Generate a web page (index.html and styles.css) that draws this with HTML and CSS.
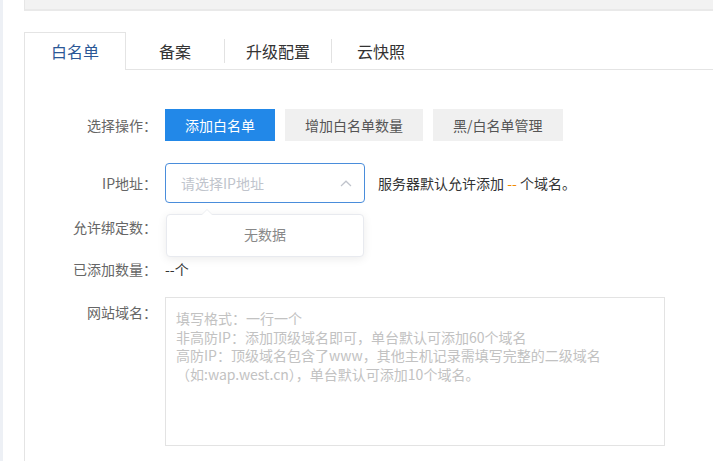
FILE: index.html
```html
<!DOCTYPE html>
<html lang="zh-CN">
<head>
<meta charset="utf-8">
<title>白名单</title>
<link rel="stylesheet" href="styles.css">
</head>
<body>
<div class="page">
  <div class="edge"></div>
  <div class="main">
    <div class="topbar"></div>
    <div class="tabs">
      <div class="tab active">白名单</div>
      <div class="tab">备案</div>
      <span class="tab-sep"></span>
      <div class="tab">升级配置</div>
      <span class="tab-sep"></span>
      <div class="tab">云快照</div>
    </div>
    <div class="panel">
      <div class="row row-ops">
        <div class="label">选择操作：</div>
        <div class="btns">
          <button class="btn btn-primary">添加白名单</button>
          <button class="btn">增加白名单数量</button>
          <button class="btn">黑/白名单管理</button>
        </div>
      </div>
      <div class="row row-ip">
        <div class="label">IP地址：</div>
        <div class="select-wrap">
          <div class="select">
            <span class="placeholder">请选择IP地址</span>
            <svg class="caret" width="12" height="7" viewBox="0 0 12 7"><path d="M1 6 L6 1.2 L11 6" fill="none" stroke="#c0c4cc" stroke-width="1.2"/></svg>
          </div>
          <div class="dropdown">
            <span class="arrow"></span>
            <span class="empty">无数据</span>
          </div>
        </div>
        <div class="hint">服务器默认允许添加 <span class="orange">--</span> 个域名。</div>
      </div>
      <div class="row row-text row-first">
        <div class="label">允许绑定数：</div>
      </div>
      <div class="row row-text">
        <div class="label">已添加数量：</div>
        <div class="value">--个</div>
      </div>
      <div class="row row-domain">
        <div class="label label-top">网站域名：</div>
        <div class="textarea">
          <div>填写格式：一行一个</div>
          <div>非高防IP：添加顶级域名即可，单台默认可添加60个域名</div>
          <div>高防IP：顶级域名包含了www，其他主机记录需填写完整的二级域名</div>
          <div>（如:wap.west.cn），单台默认可添加10个域名。</div>
        </div>
      </div>
    </div>
  </div>
</div>
</body>
</html>
```
FILE: styles.css
```css
html, body {
  margin: 0;
  padding: 0;
  background: #fff;
  font-family: "Noto Sans CJK SC", "Microsoft YaHei", "Liberation Sans", sans-serif;
  font-size: 14px;
  color: #333;
  overflow: hidden;
}
.page {
  display: flex;
  height: 461px;
}
.edge {
  width: 3px;
  background: #edf0f5;
  flex: none;
  margin-right: 21px;
}
.main {
  flex: 1;
  display: flex;
  flex-direction: column;
}
.topbar {
  height: 9px;
  background: #f2f2f2;
  border-left: 1px solid #e6e6e6;
  border-bottom: 2px solid #e9e9e9;
  margin-bottom: 21px;
}
.tabs {
  display: flex;
  align-items: stretch;
  height: 37px;
  border-bottom: 1px solid #e4e4e4;
}
.tab {
  box-sizing: border-box;
  height: 38px;
  min-width: 98px;
  padding: 0 20px 2px;
  display: flex;
  align-items: center;
  justify-content: center;
  font-size: 16px;
  color: #333;
  border: 1px solid transparent;
  border-bottom: none;
}
.tab.active {
  min-width: 102px;
  color: #2b5796;
  background: #fff;
  border-color: #e4e4e4;
  margin-bottom: -1px;
  position: relative;
  z-index: 1;
}
.tab-sep {
  width: 1px;
  height: 24px;
  background: #e2e2e2;
  align-self: center;
  flex: none;
}
.panel {
  flex: 1;
  border-left: 1px solid #e4e4e4;
  padding-top: 39px;
}
.row {
  display: flex;
  align-items: center;
}
.label {
  width: 132px;
  flex: none;
  text-align: right;
  color: #666;
  margin-right: 8px;
  line-height: 20px;
}
.label-top {
  align-self: flex-start;
  padding-top: 5px;
}
.row-ops {
  height: 32px;
  margin-bottom: 22px;
}
.btns {
  display: flex;
  gap: 10px;
}
.btn {
  height: 32px;
  padding: 0 20px;
  border: none;
  border-radius: 0;
  background: #f0f0f0;
  color: #555;
  font-family: inherit;
  font-size: 14px;
  cursor: pointer;
}
.btn-primary {
  background: #2288e8;
  color: #fff;
}
.row-ip {
  height: 40px;
}
.select-wrap {
  position: relative;
  width: 200px;
  flex: none;
}
.select {
  box-sizing: border-box;
  height: 40px;
  border: 1px solid #4a8ddb;
  border-radius: 4px;
  display: flex;
  align-items: center;
  justify-content: space-between;
  padding: 0 12px 0 15px;
}
.placeholder {
  color: #c0c4cc;
}
.caret {
  display: block;
}
.dropdown {
  position: absolute;
  left: 1px;
  top: 51px;
  width: 198px;
  height: 43px;
  box-sizing: border-box;
  padding-bottom: 3px;
  background: #fff;
  border: 1px solid #e8eaef;
  border-radius: 4px;
  box-shadow: 0 2px 10px rgba(0, 0, 0, 0.08);
  display: flex;
  align-items: center;
  justify-content: center;
  z-index: 5;
}
.arrow {
  position: absolute;
  left: 34px;
  top: -6px;
  width: 0;
  height: 0;
  border-left: 6px solid transparent;
  border-right: 6px solid transparent;
  border-bottom: 6px solid #ebedf0;
}
.arrow::after {
  content: "";
  position: absolute;
  left: -5px;
  top: 1px;
  border-left: 5px solid transparent;
  border-right: 5px solid transparent;
  border-bottom: 5px solid #fff;
}
.empty {
  color: #888;
  font-size: 14px;
}
.hint {
  margin-left: 13px;
  color: #333;
}
.orange {
  color: #f08a00;
}
.row-text {
  height: 42px;
}
.row-first {
  margin-top: 3px;
}
.value {
  color: #333;
}
.row-domain {
  margin-top: 7px;
  align-items: flex-start;
}
.textarea {
  box-sizing: border-box;
  width: 500px;
  height: 149px;
  border: 1px solid #e3e3e3;
  padding: 11px 10px;
  color: #c2c2c2;
  font-size: 14px;
  line-height: 18.7px;
}
```
